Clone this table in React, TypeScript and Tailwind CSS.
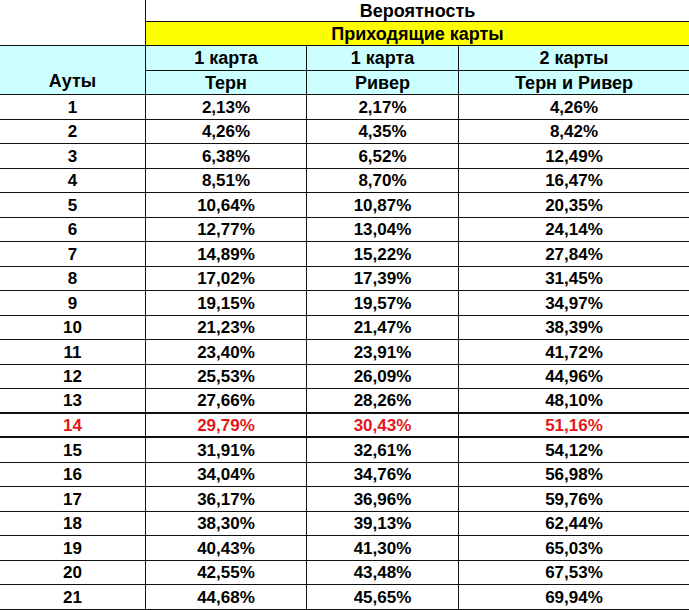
const rows: [number, string, string, string][] = [
  [1, '2,13%', '2,17%', '4,26%'],
  [2, '4,26%', '4,35%', '8,42%'],
  [3, '6,38%', '6,52%', '12,49%'],
  [4, '8,51%', '8,70%', '16,47%'],
  [5, '10,64%', '10,87%', '20,35%'],
  [6, '12,77%', '13,04%', '24,14%'],
  [7, '14,89%', '15,22%', '27,84%'],
  [8, '17,02%', '17,39%', '31,45%'],
  [9, '19,15%', '19,57%', '34,97%'],
  [10, '21,23%', '21,47%', '38,39%'],
  [11, '23,40%', '23,91%', '41,72%'],
  [12, '25,53%', '26,09%', '44,96%'],
  [13, '27,66%', '28,26%', '48,10%'],
  [14, '29,79%', '30,43%', '51,16%'],
  [15, '31,91%', '32,61%', '54,12%'],
  [16, '34,04%', '34,76%', '56,98%'],
  [17, '36,17%', '36,96%', '59,76%'],
  [18, '38,30%', '39,13%', '62,44%'],
  [19, '40,43%', '41,30%', '65,03%'],
  [20, '42,55%', '43,48%', '67,53%'],
  [21, '44,68%', '45,65%', '69,94%'],
];

// row 14 is highlighted in the source table
const HIGHLIGHT = 14;

const head = 'flex items-center justify-center text-[18px] leading-none';

export default function App() {
  return (
    <div className="w-[689px] h-[610px] overflow-hidden bg-white font-['Liberation_Sans',Arial,sans-serif] font-bold text-black">
      <div className="grid grid-cols-[146px_161px_152px_230px] grid-rows-[22px_24px_25px_24px_repeat(21,24.5px)]">
        {/* Header */}
        <div className="row-span-2 border-r border-b border-[#111]" />
        <div className={`col-span-3 border-b border-[#111] ${head}`}>Вероятность</div>
        <div className={`col-span-3 border-b border-[#111] bg-[#ffff00] ${head}`}>Приходящие карты</div>

        <div className="row-span-2 border-r border-b border-[#111] bg-[#ccffff] flex items-end justify-center pb-[4px] text-[18px] leading-none">
          Ауты
        </div>
        <div className={`border-r border-b border-[#111] bg-[#ccffff] ${head}`}>1 карта</div>
        <div className={`border-r border-b border-[#111] bg-[#ccffff] ${head}`}>1 карта</div>
        <div className={`border-b border-[#111] bg-[#ccffff] ${head}`}>2 карты</div>
        <div className={`border-r border-b border-[#111] bg-[#ccffff] ${head}`}>Терн</div>
        <div className={`border-r border-b border-[#111] bg-[#ccffff] ${head}`}>Ривер</div>
        <div className={`border-b border-[#111] bg-[#ccffff] ${head}`}>Терн и Ривер</div>

        {/* Data */}
        {rows.map(([outs, turn, river, both]) => {
          const color = outs === HIGHLIGHT ? 'text-[#e3171b]' : 'text-black';
          const bottom = outs === HIGHLIGHT - 1 || outs === HIGHLIGHT ? 'border-b-2' : 'border-b';
          const cell = `${bottom} border-[#111] flex items-center justify-center pt-[1px] text-[17px] leading-none ${color}`;
          return [
            <div key={`o${outs}`} className={`border-r ${cell}`}>{outs}</div>,
            <div key={`t${outs}`} className={`border-r ${cell}`}>{turn}</div>,
            <div key={`r${outs}`} className={`border-r ${cell}`}>{river}</div>,
            <div key={`b${outs}`} className={cell}>{both}</div>,
          ];
        })}
      </div>
    </div>
  );
}
